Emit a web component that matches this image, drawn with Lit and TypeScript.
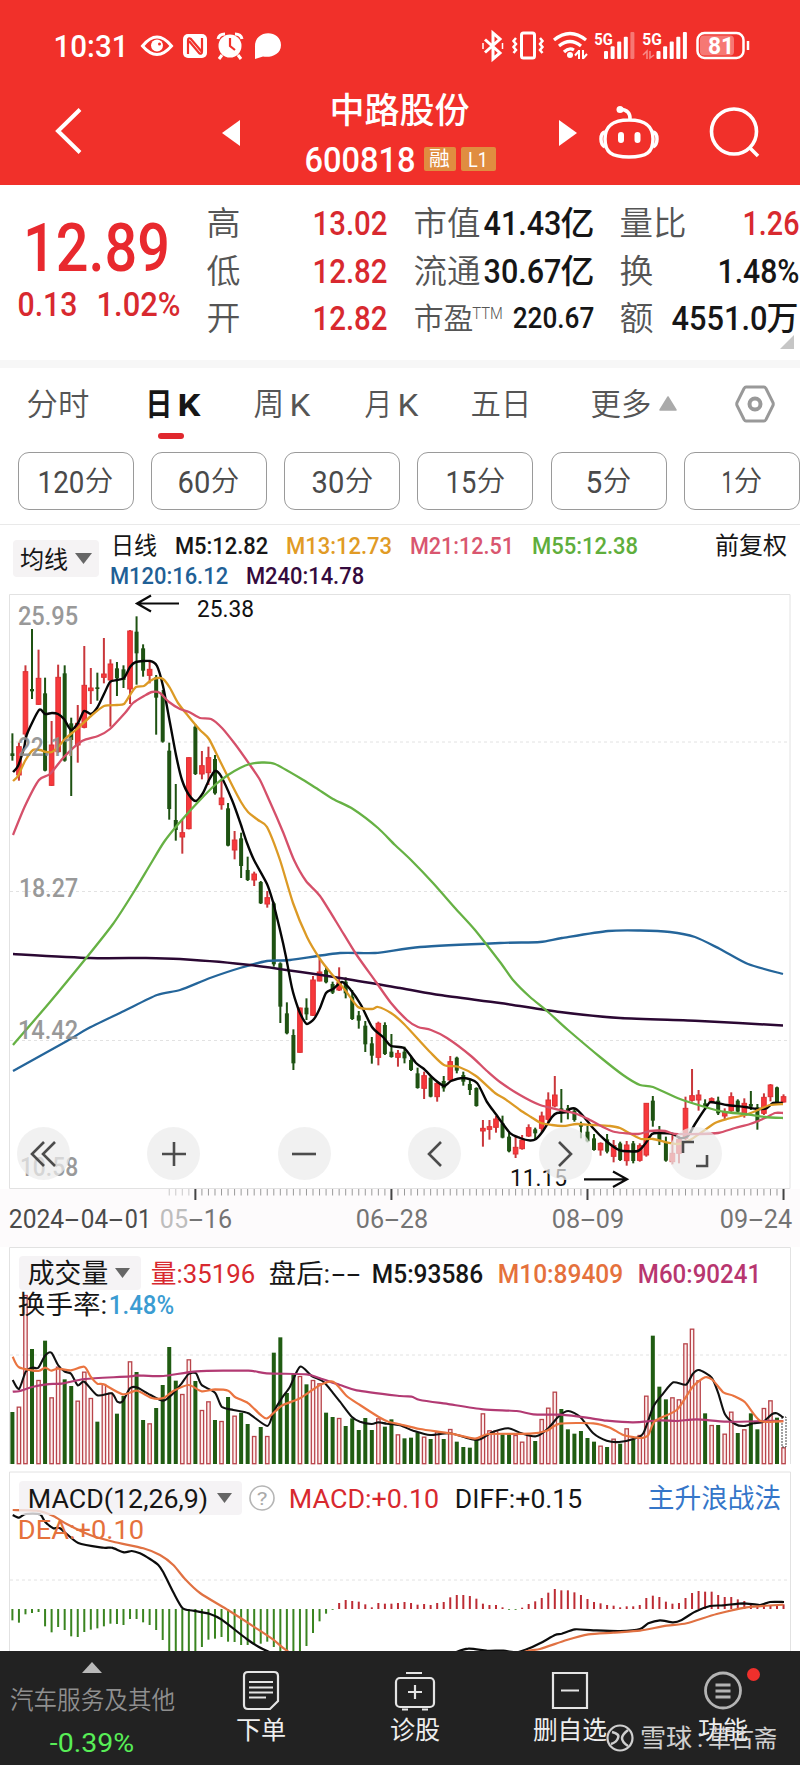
import { LitElement, html, svg, css, nothing } from "lit";
import { customElement } from "lit/decorators.js";

interface TextOpts {
  weight?: number;
  height?: number;
}

// Text fitted to an exact ink width; the cap height is centred in its box.
const fit = (text: string, width: number, size: number, color: string, o: TextOpts = {}) => {
  const h = o.height ?? Math.round(size * 1.1);
  const pad = size * 0.045;
  return html`<svg class="fit" width=${width} height=${h}>
    <text x=${-pad} y=${h / 2 + size * 0.356} textLength=${width + pad * 2} lengthAdjust="spacingAndGlyphs"
      font-size=${size} font-weight=${o.weight ?? 400} fill=${color}>${text}</text>
  </svg>`;
};

const label = (text: string, x0: number, x1: number, cy: number, size: number, color: string, weight = 400) => {
  const pad = size * 0.045;
  return svg`<text x=${x0 - pad} y=${cy + size * 0.356} textLength=${x1 - x0 + pad * 2} lengthAdjust="spacingAndGlyphs"
    font-size=${size} font-weight=${weight} fill=${color}>${text}</text>`;
};

const RED = "#d8292f";
const INK = "#161616";
const GREY = "#555";
const X0 = 12.4;
const STEP = 6.535;
const px = (i: number) => X0 + i * STEP;

// direction, high, low, body top, body bottom
const parseCandles = (src: string, off: number) =>
  src.trim().split(/\s*,\s*/).map((s) => {
    const [d, ...n] = s.split(" ");
    return { up: d === "r", v: n.map((k) => off + Number(k) / 3) };
  });

const CANDLES = [
  ...parseCandles(`g 430 512 490 498,r 458 572 470 555,r 226 440 245 432,g 117 327 297 304,r 179 345 265 343,g 263 544 310 542,
r 393 588 465 586,r 224 488 262 485,g 226 515 250 512,g 383 618 400 450,r 345 518 400 465,r 168 415 286 412,r 234 342 294 302,
g 248 332 292 297,r 144 280 252 262,r 208 410 222 270,g 216 318 235 265,g 226 294 238 270,r 120 342 123 297,g 79 284 125 190,
g 163 260 175 242,r 215 280 238 256,g 255 434 262 323,g 300 458 310 455,g 458 689 482 657,g 582 752 690 720,r 690 791 728 741,
r 502 718 503 716,g 403 555 410 552,r 483 568 527 552,r 470 585 503 548,g 495 614 507 610,r 570 659 624 644,g 639 769 655 767,
r 723 808 750 780,g 728 864 745 828,g 800 873 840 870,r 845 888 852 870`, 590),
  ...parseCandles(`g 303 372 306 370,r 333 383 353 372,g 365 560 370 553,g 547 729 550 680,g 667 763 700 760,g 748 870 765 850,
r 683 818 684 817,g 655 720 683 703,r 588 708 600 706,r 537 604 576 603,g 560 610 570 607,g 605 642 612 638,r 562 633 608 630,
g 592 655 605 640,g 630 720 650 717,g 693 746 706 722,g 723 816 737 793,g 771 851 790 827,r 725 856 730 832,g 727 825 735 822,
g 762 833 815 831,r 810 860 820 832,g 800 850 815 835,g 827 873 840 870,g 863 926 880 924,r 875 957 887 925,g 888 952 893 950,
r 905 965 910 950,g 888 935 903 925,r 828 905 845 900,g 830 880 833 872,g 875 917 885 905,g 900 945 912 930`, 780),
  ...parseCandles(`g 322 380 324 378,r 420 500 445 453,r 420 479 440 448,r 408 458 417 442,g 407 475 430 473,g 458 517 470 514,
r 470 534 502 522,r 465 509 480 506,r 433 471 443 468,g 443 477 448 460,r 395 458 408 445,r 337 427 360 418,r 288 382 345 378,
g 327 428 385 400,g 375 418 385 395,g 385 425 392 420,g 425 475 432 440,g 437 487 455 484,g 462 512 475 510,r 487 527 490 510,
g 462 520 478 515,r 480 547 497 529,g 485 543 490 540,r 483 557 495 542,g 483 550 490 543,r 490 545 497 541,r 369 530 370 525,
g 348 440 362 422,g 438 495 455 480,g 470 545 487 542,r 460 553 520 545,r 468 550 478 520,r 350 480 385 475,r 267 365 347 361,
r 330 392 345 360,g 358 390 370 378,r 352 370 356 366,g 350 405 362 400,r 385 418 395 408,r 337 400 350 392,g 358 400 362 395,
r 355 413 370 405,g 333 390 372 380,g 372 449 382 425,r 340 405 352 400,r 312 364 315 350,g 320 368 322 366,r 343 368 350 366`, 980),
];

const VOLUME = `g516 r500 r165 g327 r420 g302 r472 r380 g418 g438 r482 r395 r474 g545 r432 r458 g521 g468 r364 g396 g540 r550
g504 g435 g321 g422 r462 r358 g423 r510 r484 g540 r543 g471 r527 g518 g552 r588 g561 r588 g338 g292 g459 g400 r408 g433 r420 r430
g518 g531 r534 g558 g535 g570 g534 g570 r535 g560 g538 r583 g595 g593 g577 r590 g597 r575 g597 r567 g605 g621 g623 g598 r520 r571
r572 g583 g582 r585 r605 r585 g603 r537 r503 r455 g507 g568 g581 g573 g594 g605 r617 g621 r596 g611 r565 g598 r585 r467 g287 g440
g478 r472 r478 r310 r266 r421 g520 r555 g555 r581 r515 g579 r568 g520 g568 r504 r481 g533 r622`
  .split(/\s+/).map((s) => ({ up: s[0] === "r", y: 1240 + Number(s.slice(1)) / 3 }));

const MACD = `466 473 448 444 441 484 502 486 495 514 516 501 494 490 484 476 477 480 462 462 472 480 495 525 565 565 565 565 565
546 524 521 516 530 531 540 540 538 536 530 546 565 565 565 565 543 504 469 446 434 414 405 408 410 418 427 414 416 416 414 411
414 419 417 420 414 411 397 390 390 393 401 416 420 420 427 434 434 428 417 409 399 383 372 376 376 382 390 402 411 415 420 422
427 424 424 420 399 392 396 410 416 414 399 384 378 380 380 390 396 396 403 408 415 422 422 422 420 418`
  .split(/\s+/).map((s) => Number(s));

// Smooth path through points; each point may be scaled from a drawing offset.
const curve = (src: string, color: string, w = 2.3, map = (x: number, y: number) => [x, y]) => {
  const p = src.trim().split(/\s+/).map((s) => {
    const [x, y] = s.split(",").map(Number);
    return map(x, y);
  });
  const f = (n: number) => n.toFixed(1);
  let d = `M${f(p[0][0])} ${f(p[0][1])}`;
  for (let i = 0; i < p.length - 1; i++) {
    const a = p[Math.max(0, i - 1)], b = p[i], c = p[i + 1], e = p[Math.min(p.length - 1, i + 2)];
    const k = 0.12;
    d += `C${f(b[0] + (c[0] - a[0]) * k)} ${f(b[1] + (c[1] - a[1]) * k)} ${f(c[0] - (e[0] - b[0]) * k)} ${f(c[1] - (e[1] - b[1]) * k)} ${f(c[0])} ${f(c[1])}`;
  }
  return svg`<path d=${d} fill="none" stroke=${color} stroke-width=${w} stroke-linejoin="round"/>`;
};

const M5 = `13,772 18,766 24,748 27,734 39,710 45,714 52,713 58,714 64,719 71,730 78,723 84,711 91,714 97,708 104,694 110,682 117,680
124,678 130,667 136,662 150,661 157,666 163,686 170,723 176,755 182,780 189,795 196,801 203,793 209,780 215,771 221,776 232,800
240,822 247,843 254,860 267,884 273,902 280,930 286,957 292,988 298,1008 303,1019 307,1024 314,1019 320,1008 326,993 333,989
342,982 350,989 361,1005 372,1027 383,1037 391,1046 404,1048 416,1063 424,1069 434,1079 444,1086 451,1081 464,1078 477,1083
487,1102 495,1113 510,1133 520,1138 530,1140.5 536,1139 543,1131 552,1117 557,1113 567,1112 570,1109 576,1109 584,1117 593,1128
605,1140 617,1149 623,1151 638,1151 645,1144 652,1134 659,1133 673,1134 680,1138 688,1136 695,1124 707,1106 711,1102 727,1105
745,1107 757,1109 767,1108 773,1103 783,1103`;
const M13 = `13,781 18,776 25,761 33,750 40,750 46,752 52,752 58,747 65,739 78,728 91,716 104,706 117,705 124,704 130,695 136,687
144,686 150,681 157,678 163,679 170,688 178,703 189,717 200,730 209,739 220,761 232,785 241,802 248,812 258,820 267,827 280,860
293,903 307,937 320,959 330,972 345,990 358,1007 372,1009 378,1007 391,1013 404,1024 430,1052 444,1065 459,1067 476,1076 495,1093
505,1099 520,1110 531,1117 541,1123 552,1125 563,1126 577,1124 592,1125 610,1126 620,1128 631,1134 641,1139 653,1139 665,1142
678,1144 690,1140 702,1132 715,1123 727,1119 745,1115 758,1110 770,1105 783,1104`;
const M21 = `13,835 25,806 39,780 50,774 64,757 82,741 98,736 110,729 125,713 133,703 144,696 152,692 160,693 169,702 180,709
189,712 200,718 211,719 222,728 235,744 250,765 260,780 270,802 283,832 294,860 306,881 320,896 340,928 356,954 376,982 391,1003
407,1020 418,1027 431,1030 447,1038 471,1056 487,1071 500,1082 520,1095 540,1105 560,1110 577,1114 590,1120 601,1126 615,1132
638,1134 650,1131 665,1131 675,1134 700,1134 718,1133 735,1128 750,1124 765,1118 775,1113 783,1113`;
const M55 = `13,1045 50,1002 87,957 113,924 135,890 150,865 164,842 180,822 200,800 215,785 228,775 240,768 250,764 262,762.5
275,764 300,778 316,788 333,799 353,809 378,828 395,845 411,860 433,883 455,908 475,930 500,962 513,980 530,997 547,1011 568,1030
600,1057 623,1075 640,1085 653,1087 680,1099 705,1107 725,1112 745,1114 765,1117 783,1118`;
const M120 = `13,1071 67,1041 87,1029 124,1011 157,995 180,990 210,978 240,968 267,961 290,960 340,953 375,953 420,947 500,943
540,942 562,938 608,931 640,930.5 670,932 695,937 720,949 748,964 783,974`;
const M240 = `13,954 90,958 146,958 180,959 250,965 340,978 400,988 440,995 500,1003 560,1012 620,1018 700,1021 783,1025.5`;

const toVol = (x: number, y: number) => [x / 3, 1240 + y / 3];
const toMacd = (x: number, y: number) => [x / 3, 1465 + y / 3];

const V5 = `38,420 57,447 77,395 96,383 115,383 135,347 154,338 174,375 194,395 213,401 233,436 253,425 292,466 335,460 352,485
368,484 390,445 410,442 450,464 490,482 520,460 545,430 566,402 588,400 605,435 645,458 665,500 700,510 745,520 802,558 821,515
845,475 870,440 900,380 935,408 970,425 1000,460 1020,485 1055,530 1080,545 1115,552 1135,547 1160,551 1200,556 1240,572 1290,585
1350,580 1415,598 1440,598 1480,575 1525,565 1565,580 1608,589 1645,565 1675,530 1705,513 1740,530 1780,580 1820,602 1858,606
1900,597 1930,580 1960,500 1990,460 2020,427 2058,434 2078,402 2097,390 2135,413 2155,460 2175,523 2205,552 2233,558 2260,550
2290,545 2315,523 2330,520 2350,533`;
const V10 = `38,350 57,382 115,393 135,383 154,392 174,386 213,391 253,380 272,410 292,431 311,433 368,463 410,452 455,474 490,474
520,453 566,435 605,454 645,448 685,452 705,471 745,490 780,523 802,535 845,497 900,475 960,435 1000,425 1040,468 1080,495
1135,530 1165,545 1200,553 1260,567 1350,580 1425,596 1465,582 1590,581 1640,572 1680,551 1780,550 1830,563 1870,585 1920,594
1945,585 1965,543 2030,510 2078,440 2115,412 2138,420 2170,457 2200,467 2235,487 2280,542 2350,544`;
const V60 = `38,455 57,454 100,440 140,433 190,430 255,417 390,409 410,406 490,408 590,394 745,392 800,400 920,403 960,415
1020,435 1070,451 1200,468 1235,470 1260,480 1350,493 1450,508 1550,513 1600,523 1680,524 1760,533 1820,542 1900,547 1980,541
2030,543 2090,538 2180,545 2300,543 2350,543`;
const DIFF = `38,150 57,158 77,147 120,148 135,170 160,190 180,190 235,234 310,248 335,248 372,262 395,258 420,265 450,282 475,300
490,322 520,382 548,430 580,437 630,447 665,464 740,522 770,542 810,562 1000,640 1200,640 1360,565 1405,551 1460,557 1510,557
1550,562 1580,553 1620,535 1665,510 1685,506 1725,493 1780,496 1860,498 1920,492 1945,475 1980,466 2020,472 2045,465 2085,440
2130,423 2170,421 2230,415 2280,420 2310,411 2352,411`;
const DEA = `38,135 110,137 160,153 200,177 270,210 340,230 430,250 480,270 520,300 555,342 600,384 685,436 760,484 820,524 865,560
1000,640 1400,640 1570,562 1620,552 1700,525 1765,508 1840,503 1920,497 2000,482 2060,475 2150,447 2240,427 2350,419`;

const textCss = css`
  svg { display: block; overflow: visible; flex: none; }
  text { font-family: Roboto, "Noto Sans CJK SC", sans-serif; white-space: pre; }
`;

@customElement("status-header")
class StatusHeader extends LitElement {
  static styles = [textCss, css`
    :host { display: block; height: 185px; background: #f1302a; }
    .status { height: 92px; display: flex; align-items: center; justify-content: space-between; padding: 0 50px 0 54px; }
    .nav { height: 93px; display: flex; align-items: center; }
    .back { margin: 0 141px 15px 55px; }
    .arrow { margin-bottom: 11px; }
    .find { margin-bottom: 14px; }
    .title { width: 319px; height: 93px; display: flex; flex-direction: column; align-items: center; }
    .code { display: flex; align-items: center; height: 38px; margin-left: 2px; margin-top: 10px; }
    .tag { height: 24px; border-radius: 2px; background: #e08d40; display: flex; align-items: center; justify-content: center; }
    .rong { width: 32px; margin: 0 5px 0 10px; }
    .level { width: 35px; }
    .bot { margin: 0 50px 12px 22px; }
  `];

  signal(x: number, n: number, dim: number, bottom: number) {
    return Array.from({ length: n }, (_, i) => {
      const h = 8 + (i * 19) / (n - 1);
      return svg`<rect x=${x + i * 6.6} y=${bottom - h} width="4" height=${h} rx="1" fill="#fff" opacity=${i >= dim ? 0.35 : 1}/>`;
    });
  }

  render() {
    return html`
      <div class="status">
        <svg width="230" height="30" fill="none" stroke="#fff">
          <g stroke="none">${label("10:31", 1, 73, 15, 32, "#fff", 500)}</g>
          <path d="M88.500 15Q103 -3 117.500 15Q103 32 88.500 15Z" stroke-width="3"/>
          <circle cx="103" cy="14.500" r="6" fill="#fff" stroke="none"/><circle cx="105.500" cy="13" r="1.500" fill="#f1302a" stroke="none"/>
          <rect x="129" y="3" width="24" height="24" rx="5" fill="#fff" stroke="none"/>
          <path d="M134 23V9.500Q134 6 137 8L148 21M148 7V20.500Q148 24 145 22L135 10" stroke="#f1302a" stroke-width="2.200"/>
          <circle cx="176" cy="15" r="11.500" fill="#fff" stroke="none"/>
          <path d="M164 8Q165 3 171 3M181 3Q187 3 188 8M168 24L165 28M184 24L187 28" stroke-width="3"/>
          <path d="M176 7V15L181 19" stroke="#f1302a" stroke-width="2.200"/>
          <path d="M201 28V16C200 -2 227 -2 227 14C227 24 216 27 209 25.500Z" fill="#fff" stroke="none"/>
        </svg>
        <svg width="268" height="30" fill="none" stroke="#fff">
          <path d="M3 8.500L18 22L11 28V2L18 8L3 21.500" stroke-width="3"/>
          <path d="M1 12V18M20.500 12V18" stroke-width="1.500"/>
          <rect x="39.500" y="2" width="13" height="25" rx="2" stroke-width="3"/>
          <path d="M34 7L31.500 10L34 13L31.500 16L34 19L31.500 22M58 7L60.500 10L58 13L60.500 16L58 19L60.500 22" stroke-width="2.500"/>
          <path d="M72 9Q88 -4 104 9M77 15Q88 6 99 15M82 21Q87 16 92 19" stroke-width="3.200"/>
          <circle cx="88" cy="24" r="3" fill="#fff" stroke="none"/>
          <path d="M97 19V28M93 24.500L97 20M101 19V28M105 23L101 27.500" stroke-width="2"/>
          <g stroke="none">${label("5G", 113, 130, 8, 17, "#fff", 700)}${label("5G", 161, 179, 8, 17, "#fff", 700)}
          ${this.signal(122, 5, 4, 28)}${this.signal(174.5, 5, 9, 28)}</g>
          <path d="M161 24L165 20V28M172 24L168 27V20" stroke-width="1.500" opacity=".45"/>
          <rect x="215.500" y="2" width="46" height="25" rx="7" stroke-width="2.500"/>
          <rect x="218" y="4.500" width="34" height="20" rx="4" fill="#fff" opacity=".35" stroke="none"/>
          <path d="M266 10V19" stroke-width="2.500"/>
          <g stroke="none">${label("81", 227, 251, 14.5, 24, "#fff", 700)}</g>
        </svg>
      </div>
      <div class="nav">
        <svg class="back" width="26" height="46" fill="none" stroke="#fff" stroke-width="4"><path d="M25 1.500L3 23L25 44.500"/></svg>
        <svg class="arrow" width="18" height="26"><path d="M18 0V26L0 13Z" fill="#fff"/></svg>
        <div class="title">
          <div class="name">${fit("中路股份", 137, 35, "#fff", { weight: 500, height: 38 })}</div>
          <div class="code">
            ${fit("600818", 108, 35, "#fff", { weight: 500 })}
            <span class="tag rong">${fit("融", 19, 20, "#fff")}</span>
            <span class="tag level">${fit("L1", 18, 21, "#fff")}</span>
          </div>
        </div>
        <svg class="arrow" width="18" height="26"><path d="M0 0V26L18 13Z" fill="#fff"/></svg>
        <svg class="bot" width="60" height="54" fill="none" stroke="#fff" stroke-width="3.500">
          <path d="M31 14Q32 4 21 3M30 14C11 14 6 22 6 33C6 46 12 51 30 51C48 51 54 46 54 33C54 22 49 14 30 14Z"/>
          <circle cx="21" cy="3.500" r="3.500" fill="#fff" stroke="none"/>
          <path d="M6 26Q2 27 2 33Q2 39 6 41M54 26Q58 27 58 33Q58 39 54 41"/>
          <path d="M22 29V34M38.500 29V34" stroke-width="6" stroke-linecap="round"/>
        </svg>
        <svg class="find" width="50" height="50" fill="none" stroke="#fff" stroke-width="3.600"><circle cx="25" cy="24.500" r="22.500"/><path d="M40 40L49 49"/></svg>
      </div>`;
  }
}

@customElement("quote-panel")
class QuotePanel extends LitElement {
  static styles = [textCss, css`
    :host { display: flex; height: 175px; background: #fff; border-bottom: 8px solid #f7f7f7; }
    .price { width: 208px; }
    .big { margin: 36px 0 0 26px; }
    .chg { display: flex; gap: 22px; margin: 12px 0 0 19px; }
    .col { display: flex; flex-direction: column; padding-top: 14px; }
    .row { display: flex; align-items: center; justify-content: space-between; height: 47.7px; }
    .hi { width: 178px; margin-right: 29px; }
    .cap { width: 178px; margin-right: 28px; }
    .misc { width: 177px; }
    .num { display: flex; align-items: center; gap: 2px; }
    .pe { display: flex; align-items: flex-start; gap: 1px; }
    .corner { margin: 133px 0 0 -18px; width: 15px; }
    .endpad { padding-right: 1px; }
  `];

  render() {
    const L = (s: string, w: number, z = 33) => fit(s, w, z, GREY, { weight: 350 });
    const N = (s: string, w: number, c = INK, z = 33) => fit(s, w, z, c, { weight: 500 });
    return html`
      <div class="price">
        <div class="big">${fit("12.89", 141, 66, "#e8292e", { weight: 500, height: 53 })}</div>
        <div class="chg">${N("0.13", 57, RED)}${N("1.02%", 81, RED)}</div>
      </div>
      <div class="col hi">
        <div class="row">${L("高", 31)}${N("13.02", 72, RED)}</div>
        <div class="row">${L("低", 31)}${N("12.82", 72, RED)}</div>
        <div class="row">${L("开", 31)}${N("12.82", 72, RED)}</div>
      </div>
      <div class="col cap">
        <div class="row">${L("市值", 64)}<span class="num">${N("41.43", 75)}${N("亿", 31)}</span></div>
        <div class="row">${L("流通", 64)}<span class="num">${N("30.67", 75)}${N("亿", 31)}</span></div>
        <div class="row"><span class="pe">${L("市盈", 57, 30)}${fit("TTM", 29, 17, GREY, { weight: 300, height: 22 })}</span>${N("220.67", 79, INK, 29)}</div>
      </div>
      <div class="col misc">
        <div class="row">${L("量比", 64)}${N("1.26", 54, RED)}</div>
        <div class="row">${L("换", 31)}${N("1.48%", 79)}</div>
        <div class="row endpad">${L("额", 31)}<span class="num">${N("4551.0", 93)}${N("万", 29)}</span></div>
      </div>
      <svg class="corner" width="14" height="14"><path d="M14 17V31H0Z" fill="#c6c6c6"/></svg>`;
  }
}

@customElement("period-tabs")
class PeriodTabs extends LitElement {
  static styles = [textCss, css`
    :host { display: block; background: #fff; border-bottom: 1px solid #e9e9e9; height: 156px; }
    .tabs { display: flex; height: 84px; padding-left: 28px; }
    .tab { display: flex; flex-direction: column; height: 84px; padding-top: 19px; box-sizing: border-box; }
    .g1 { margin-left: 59px; } .g2 { margin-left: 56px; } .g3 { margin-left: 57px; } .g4 { margin-left: 55px; } .g5 { margin-left: 62px; }
    .pair { display: flex; gap: 8px; }
    .mark { width: 26px; height: 6px; border-radius: 3px; background: #e0282e; margin: 11px 0 0 11px; }
    .up { margin: 28px 0 0 9px; }
    .gear { margin: 17px 0 0 58px; }
    .mins { display: flex; gap: 17.300px; padding-left: 17.500px; }
    .min { box-sizing: border-box; width: 116px; height: 58px; flex: none; border: 1px solid #9a9a9a; border-radius: 11px;
      display: flex; align-items: center; justify-content: center; gap: 3px; padding-top: 1px; }
  `];

  render() {
    const k = (a: string, w: number, wt = 350, c = GREY, kw = 18) =>
      html`<span class="pair">${fit(a, w, 31, c, { weight: wt })}${fit("K", kw, 32, c, { weight: wt === 350 ? 400 : wt })}</span>`;
    const mins: [string, number][] = [["120", 44], ["60", 30], ["30", 30], ["15", 28], ["5", 14], ["1", 9]];
    return html`
      <div class="tabs">
        <div class="tab">${fit("分时", 60, 31, GREY, { weight: 350 })}</div>
        <div class="tab g1">${k("日", 24, 700, INK, 20)}<span class="mark"></span></div>
        <div class="tab g2">${k("周", 28)}</div>
        <div class="tab g3">${k("月", 25)}</div>
        <div class="tab g4">${fit("五日", 58, 31, GREY, { weight: 350 })}</div>
        <div class="tab g5">${fit("更多", 58, 31, GREY, { weight: 350 })}</div>
        <svg class="up" width="18" height="15"><path d="M9 1L17 14H1Z" fill="#aaa" stroke="#aaa" stroke-width="1.500" stroke-linejoin="round"/></svg>
        <svg class="gear" width="40" height="38" fill="none" stroke="#999">
          <path d="M11 2H29Q30 2 31 3.500L38 17.500Q38.500 19 38 20.500L31 34.500Q30 36 29 36H11Q10 36 9 34.500L2 20.500Q1.500 19 2 17.500L9 3.500Q10 2 11 2Z" stroke-width="3"/>
          <circle cx="20" cy="19" r="5.500" stroke-width="4"/>
        </svg>
      </div>
      <div class="mins">
        ${mins.map(([n, w]) => html`<span class="min">${fit(n, w, 31, "#4a4a4a", { weight: 400 })}${fit("分", 26, 28, "#4a4a4a", { weight: 350 })}</span>`)}
      </div>`;
  }
}

@customElement("kline-chart")
class KlineChart extends LitElement {
  static styles = [textCss, css`
    :host { display: block; background: #fff; }
    .legend { display: flex; height: 61px; padding-left: 13px; box-sizing: border-box; }
    .chip { width: 86px; height: 37px; margin-top: 15px; background: #f5f3f4; border-radius: 4px; display: flex; align-items: center;
      gap: 8px; padding-left: 8px; box-sizing: border-box; }
    .lines { display: flex; flex-direction: column; margin: 7px 0 0 12px; width: 605px; gap: 3px; }
    .line { display: flex; gap: 20px; padding-left: 1px; }
    .adj { margin-top: 7px; }
    .second { padding-left: 0; }
    .stage { display: grid; }
    .layer { grid-area: 1 / 1; }
    .tools { align-self: end; display: flex; justify-content: space-between; padding: 0 78px 62px 17px; z-index: 1; }
    .tool { width: 53px; height: 53px; border-radius: 50%; background: rgba(235, 235, 235, .72); display: flex; align-items: center; justify-content: center; }
  `];

  render() {
    const t = (s: string, w: number, c: string) => fit(s, w, 24.5, c, { weight: 500 });
    const glyphs = ["M14 2L2 14L14 26M25 2L13 14L25 26", "M14 2V26M2 14H26", "M2 14H26", "M20 2L8 14L20 26", "M8 2L20 14L8 26", "M2 13V2H13M26 15V26H15"];
    const date = (a: string, b: string, x: number, c: string, first = c) => svg`
      ${label(a, x, x + 26, 1219, 25.5, first)}${label("-", x + 29, x + 41, 1219, 25.5, c)}${label(b, x + 44, x + 70, 1219, 25.5, c)}`;
    return html`
      <div class="legend">
        <span class="chip">${fit("均线", 46, 24, INK)}<svg width="17" height="11"><path d="M0 0H17L8.500 11Z" fill="#666"/></svg></span>
        <div class="lines">
          <div class="line">${fit("日线", 44, 23.5, INK, { height: 27 })}${t("M5:12.82", 91, INK)}${t("M13:12.73", 104, "#e19b25")}${t("M21:12.51", 102, "#d9566f")}${t("M55:12.38", 104, "#5fae3c")}</div>
          <div class="line second">${t("M120:16.12", 116, "#1f6096")}${t("M240:14.78", 116, "#350a3d")}</div>
        </div>
        <span class="adj">${fit("前复权", 70, 24, INK)}</span>
      </div>
      <div class="stage">
        <svg class="layer" width="800" height="656" viewBox="0 586 800 656">
          <rect x="0" y="1189" width="800" height="53" fill="#fdfbfc"/>
          <path d="M9.500 594.500H790V1188.500H9.500Z" fill="#fff" stroke="#e2e2e2"/>
          ${[742, 891.5, 1040.5].map((y) => svg`<path d="M10 ${y}H790" stroke="#e2e2e2" stroke-dasharray="3 3"/>`)}
          ${CANDLES.map(({ up, v }, i) => {
            const c = up ? "#c9373b" : "#1e5212", x = px(i);
            return svg`<rect x=${x - 1} y=${v[0]} width="2" height=${v[1] - v[0]} fill=${c}/>
              <rect x=${x - (up ? 2.3 : 2)} y=${v[2]} width=${up ? 4.6 : 4} height=${Math.max(1.5, v[3] - v[2])} fill=${up ? "#f7383b" : c} stroke=${up ? "#dd3034" : "none"} stroke-width="1"/>`;
          })}
          ${curve(M120, "#24659a")}${curve(M240, "#2b0833", 2.5)}${curve(M5, "#060606", 2.4)}${curve(M13, "#dc9a25")}${curve(M21, "#d5506a")}${curve(M55, "#66b144")}
          <g opacity=".9">
            ${label("25.95", 19, 77, 616.5, 25, "#8f8f8f", 500)}
            ${label("22.11", 19, 75, 747, 25, "#8f8f8f", 500)}
            ${label("18.27", 20, 77, 888, 25, "#8f8f8f", 500)}
            ${label("14.42", 19, 77, 1030.5, 25, "#8f8f8f", 500)}
            ${label("10.58", 21, 77, 1167, 25, "#8f8f8f", 500)}
          </g>
          ${label("25.38", 198, 253, 608.5, 23, "#111")}
          ${label("11.15", 511, 566, 1178, 23, "#111")}
          <path d="M179 603.500H138M151 595.500L137 603.500L151 611.500M584 1179.300H626M613 1171.500L627 1179.300L613 1187" fill="none" stroke="#0a0a0a" stroke-width="2.200"/>
          ${Array.from({ length: 95 }, (_, k) => {
            const i = k + 24, major = (i - 28) % 30 === 0;
            return svg`<path d="M${px(i)} 1189V${major ? 1200 : 1195.5}" stroke=${major ? "#444" : "#999"} stroke-width=${major ? 2 : 1} opacity=${i < 28 ? 0.5 : 1}/>`;
          })}
          ${label("2024", 10, 63, 1219, 25.5, "#4b4b4b")}${label("-", 66, 78, 1219, 25.5, "#4b4b4b")}${label("04", 82, 107, 1219, 25.5, "#4b4b4b")}${label("-", 110, 122, 1219, 25.5, "#4b4b4b")}${label("01", 126, 150, 1219, 25.5, "#4b4b4b")}
          ${date("05", "16", 161, "#747474", "#bdbdbd")}
          ${date("06", "28", 357, "#747474")}
          ${date("08", "09", 553, "#747474")}
          ${date("09", "24", 721, "#747474")}
        </svg>
        <div class="layer tools">
          ${glyphs.map((d) => html`<span class="tool"><svg width="28" height="28"><path d=${d} fill="none" stroke="#4c4c4c" stroke-width="2.600"/></svg></span>`)}
        </div>
      </div>`;
  }
}

const panelCss = css`
  :host { display: grid; background: #fff; }
  .layer { grid-area: 1 / 1; }
  .head { display: flex; align-items: center; height: 34px; padding-left: 19px; }
  .texts { z-index: 1; }
  .chip { height: 34px; background: rgba(243, 240, 242, .8); border-radius: 4px; display: flex; align-items: center; gap: 8px; padding-left: 10px; box-sizing: border-box; }
  .sub { display: flex; gap: 4px; padding-left: 19px; }
`;
const down = html`<svg width="15" height="10"><path d="M0 0H15L7.500 10Z" fill="#666"/></svg>`;

@customElement("volume-chart")
class VolumeChart extends LitElement {
  static styles = [textCss, panelCss, css`
    .texts { padding-top: 14px; }
    .chip { width: 122px; margin-right: 11px; }
    .vals { display: flex; align-items: center; }
    .a { margin-right: 16px; } .b { display: flex; gap: 4px; margin-right: 14px; } .c { margin-right: 17px; }
  `];

  render() {
    const t = (s: string, w: number, c: string) => fit(s, w, 26, c, { weight: 500 });
    return html`
      <svg class="layer" width="800" height="226" viewBox="0 1242 800 226">
        <rect x="0" y="1242" width="800" height="5" fill="#fdfbfc"/>
        <path d="M9.500 1464V1247.500H790.500V1464" fill="none" stroke="#e2e2e2"/>
        <path d="M10 1355H790" stroke="#e2e2e2" stroke-dasharray="3 3"/>
        ${VOLUME.map(({ up, y }, i) => up
          ? svg`<rect x=${px(i) - 1.7} y=${y + 0.5} width="3.400" height=${1463.2 - y} fill="#fdeeee" stroke="#b8444a" stroke-width="1.300"/>`
          : svg`<rect x=${px(i) - 2} y=${y} width="4" height=${1464 - y} fill="#205c12"/>`)}
        <path d="M782 1417H786V1447H782Z" fill="none" stroke="#444" stroke-dasharray="2 1"/>
        ${curve(V5, "#111", 2.1, toVol)}${curve(V60, "#b23a73", 2.2, toVol)}${curve(V10, "#ea7440", 2.2, toVol)}
      </svg>
      <div class="layer texts">
        <div class="head">
          <span class="chip">${fit("成交量", 78, 27, INK)}${down}</span>
          <span class="vals">
            <span class="a">${fit("量:35196", 102, 26, RED)}</span>
            <span class="b">${fit("盘后:", 59, 26, INK)}${fit("-", 11, 26, INK)}${fit("-", 11, 26, INK)}</span>
            <span class="c">${t("M5:93586", 109, INK)}</span><span class="c">${t("M10:89409", 123, "#e5713c")}</span>${t("M60:90241", 121, "#b8366f")}
          </span>
        </div>
        <div class="sub">${fit("换手率:", 87, 26, INK)}${t("1.48%", 63, "#3b9cd2")}</div>
      </div>`;
  }
}

@customElement("macd-chart")
class MacdChart extends LitElement {
  static styles = [textCss, panelCss, css`
    :host { height: 183px; overflow: hidden; }
    .texts { padding-top: 13px; }
    .chip { width: 223px; gap: 10px; margin-right: 7px; }
    .q { margin-right: 15px; }
    .m { margin-right: 18px; }
    .d { margin-right: 68px; }
  `];

  render() {
    return html`
      <svg class="layer" width="800" height="183" viewBox="0 1468 800 183">
        <path d="M9.500 1660V1472H790.500V1660" fill="none" stroke="#e2e2e2"/>
        <path d="M10 1580H790" stroke="#e2e2e2" stroke-dasharray="3 3"/>
        ${MACD.map((v, i) => {
          const y = 1465 + v / 3, z = 1609, g = v > 432;
          return svg`<rect x=${px(i) - 1} y=${Math.min(y, z)} width="2" height=${Math.max(0.8, Math.abs(z - y))} fill=${g ? "#3a8420" : "#bd2c34"}/>`;
        })}
        ${curve(DIFF, "#0c0c0c", 2.2, toMacd)}${curve(DEA, "#e07142", 2.2, toMacd)}
      </svg>
      <div class="layer texts">
        <div class="head">
          <span class="chip">${fit("MACD(12,26,9)", 178, 26, INK)}${down}</span>
          <svg class="q" width="26" height="26"><circle cx="13" cy="13" r="12" fill="none" stroke="#b5b5b5" stroke-width="1.600"/>${label("?", 8.5, 17.5, 13.5, 19, "#aaa")}</svg>
          <span class="m">${fit("MACD:+0.10", 148, 26, RED)}</span>
          <span class="d">${fit("DIFF:+0.15", 125, 26, INK)}</span>
          ${fit("主升浪战法", 131, 27, "#3576c9")}
        </div>
        <div class="sub">${fit("DEA:+0.10", 124, 26, "#e5713c")}</div>
      </div>`;
  }
}

@customElement("bottom-bar")
class BottomBar extends LitElement {
  static styles = [textCss, css`
    :host { display: grid; grid-template-columns: 186px 150px 157px 153px 154px; height: 114px; background: #222; position: relative; }
    .item { display: flex; flex-direction: column; align-items: center; padding-top: 19px; gap: 6px; position: relative; }
    .sector { display: flex; flex-direction: column; align-items: center; padding: 11px 2px 0 0; }
    .name { margin-top: 14px; } .pct { margin-top: 14px; }
    .dot { position: absolute; left: 101px; top: 17px; width: 13px; height: 13px; border-radius: 50%; background: #f0302c; }
    .mark { position: absolute; left: 606px; top: 73px; display: flex; align-items: center; gap: 7px; opacity: .9; }
  `];

  item(icon: unknown, name: string, w: number, dot = false) {
    return html`<div class="item"><svg width="42" height="40" fill="none" stroke="#e4e4e4" stroke-width="2.200">${icon}</svg>
      ${fit(name, w, 25, "#eee")}${dot ? html`<span class="dot"></span>` : nothing}</div>`;
  }

  render() {
    return html`
      <div class="sector">
        <svg width="20" height="11"><path d="M10 0L20 11H0Z" fill="#b9b9b9"/></svg>
        <div class="name">${fit("汽车服务及其他", 163, 24.5, "#8f8f8f", { weight: 350 })}</div>
        <div class="pct">${fit("-0.39%", 82, 26, "#58ee57")}</div>
      </div>
      ${this.item(svg`<path d="M8 2H34Q38 2 38 6V31L30 39H8Q4 39 4 35V6Q4 2 8 2ZM9 12H33M9 17.500H33M9 22.500H33M9 27.500H26"/>`, "下单", 48)}
      ${this.item(svg`<rect x="2" y="8" width="38" height="29" rx="4"/><path d="M12 3H28M21 15V29M14 22H28M8 39.500H14M28 39.500H34"/>`, "诊股", 48)}
      ${this.item(svg`<path d="M4 3H38V38H4ZM12 20.500H30"/>`, "删自选", 72)}
      ${this.item(svg`<g stroke="#b4b4b4" stroke-width="2.800"><circle cx="21" cy="20.500" r="17.500"/><path d="M13.500 15H28.500M13.500 21H28.500M13.500 27H28.500"/></g>`, "功能", 48, true)}
      <div class="mark">
        <svg width="28" height="28" fill="none" stroke="#e2e2e2"><circle cx="14" cy="14" r="12.500" stroke-width="2.200"/>
          <path d="M6 8Q14 10 12 14Q11 18 5 20M22 6Q16 11 16 14Q16 18 22 22" stroke-width="2.500"/></svg>
        ${fit("雪球", 50, 25, "#e2e2e2")}${fit(":", 4, 25, "#e2e2e2")}${fit("草古斋", 67, 24, "#e2e2e2")}
      </div>`;
  }
}

@customElement("app-root")
class AppRoot extends LitElement {
  static styles = css`
    :host { display: block; width: 800px; height: 1765px; overflow: hidden; background: #fff; }
  `;

  render() {
    return html`
      <status-header></status-header>
      <quote-panel></quote-panel>
      <period-tabs></period-tabs>
      <kline-chart></kline-chart>
      <volume-chart></volume-chart>
      <macd-chart></macd-chart>
      <bottom-bar></bottom-bar>`;
  }
}
